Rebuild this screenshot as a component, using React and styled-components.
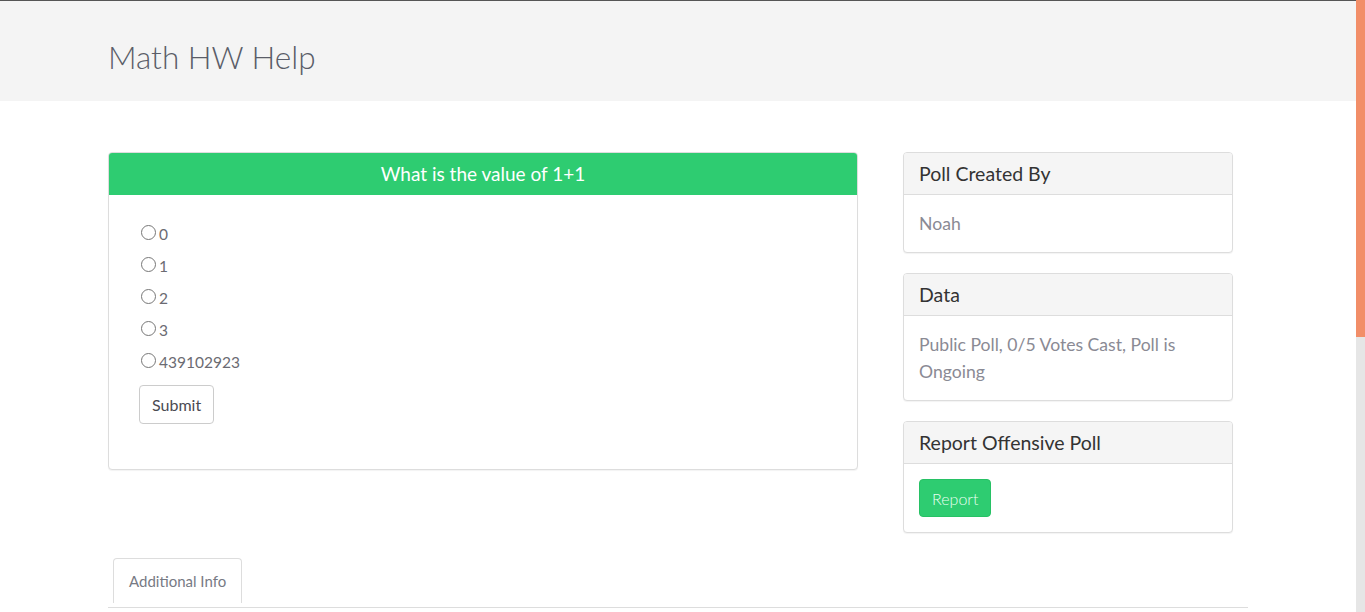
import React from "react";
import styled, { createGlobalStyle } from "styled-components";

const Global = createGlobalStyle`
  html, body { margin: 0; padding: 0; }
  body {
    font-family: Lato, "Open Sans", sans-serif;
    color: #333;
    background: #fff;
    overflow: hidden;
  }
  * { box-sizing: border-box; }
`;

const Shell = styled.div`
  display: flex;
  min-height: 100vh;
`;

const Main = styled.div`
  flex: 1;
  min-width: 0;
`;

const ScrollRail = styled.div`
  flex: 0 0 9px;
  height: 100vh;
  position: sticky;
  top: 0;
  background: #e6e6e6;
`;

const ScrollThumb = styled.div`
  height: 337px;
  background: #f28e68;
`;

const Jumbotron = styled.header`
  background: #f4f4f4;
  border-top: 1px solid #555;
  height: 101px;
`;

const Container = styled.div`
  width: 1170px;
  margin: 0 auto;
  padding: 0 15px;
`;

const Title = styled.h1`
  margin: 0;
  padding-top: 36px;
  font-size: 31.5px;
  font-weight: 300;
  color: #5a5d68;
  line-height: 40px;
`;

const Row = styled.div`
  display: grid;
  grid-template-columns: 750px 330px;
  column-gap: 45px;
  padding-top: 51px;
  align-items: start;
`;

const Column = styled.div`
  display: flex;
  flex-direction: column;
  gap: 20px;
`;

const Panel = styled.section`
  border: 1px solid #ddd;
  border-radius: 4px;
  background: #fff;
  box-shadow: 0 1px 1px rgba(0, 0, 0, 0.05);
  overflow: hidden;
`;

const PanelHeading = styled.div`
  height: 42px;
  display: flex;
  align-items: center;
  justify-content: ${(p) => (p.$center ? "center" : "flex-start")};
  padding: 0 15px;
  background: ${(p) => (p.$green ? "#2ecc71" : "#f5f5f5")};
  color: ${(p) => (p.$green ? "#fff" : "#333")};
  border-bottom: 1px solid ${(p) => (p.$green ? "#2ecc71" : "#ddd")};
  font-size: ${(p) => (p.$green ? "19px" : "19.5px")};
  font-weight: 400;
`;

const PanelBody = styled.div`
  padding: ${(p) => p.$pad || "15px"};
  font-size: 17.6px;
  line-height: 27px;
  color: #8a8a94;
`;

const Options = styled.div`
  display: flex;
  flex-direction: column;
  gap: 8px;
  padding-top: 27px;
`;

const OptionLabel = styled.label`
  display: flex;
  align-items: center;
  height: 24px;
  font-size: 15.5px;
  color: #6b6b72;
`;

const Radio = styled.input`
  width: 15px;
  height: 15px;
  margin: 0 3px 0 2px;
  position: relative;
  top: -2px;
`;

const Button = styled.button`
  font-family: inherit;
  font-size: 16px;
  height: ${(p) => (p.$green ? "38px" : "39px")};
  padding: 0 12px;
  border-radius: 4px;
  border: 1px solid ${(p) => (p.$green ? "#27c165" : "#ccc")};
  background: ${(p) => (p.$green ? "#2ecc71" : "#fff")};
  color: ${(p) => (p.$green ? "#e8fff0" : "#4a4a52")};
  font-weight: ${(p) => (p.$green ? 300 : 400)};
  cursor: pointer;
`;

const ButtonWrap = styled.div`
  padding-top: 11px;
  padding-bottom: 45px;
`;

const Tabs = styled.ul`
  list-style: none;
  margin: 25px 0 0;
  padding: 0 0 0 5px;
  display: flex;
  border-bottom: 1px solid #ddd;
`;

const Tab = styled.li`
  border: 1px solid #ddd;
  border-bottom: none;
  border-radius: 4px 4px 0 0;
  padding: 0 15px;
  height: 45px;
  margin-bottom: 4px;
  display: flex;
  align-items: center;
  font-size: 15px;
  color: #777a84;
`;

const options = ["0", "1", "2", "3", "439102923"];

export default function App() {
  return (
    <Shell>
      <Global />
      <Main>
        <Jumbotron>
          <Container>
            <Title>Math HW Help</Title>
          </Container>
        </Jumbotron>
        <Container>
          <Row>
            <Panel>
              <PanelHeading $green $center>What is the value of 1+1</PanelHeading>
              <PanelBody $pad="0 30px">
                <Options>
                  {options.map((o) => (
                    <OptionLabel key={o}>
                      <Radio type="radio" name="vote" />
                      {o}
                    </OptionLabel>
                  ))}
                </Options>
                <ButtonWrap>
                  <Button>Submit</Button>
                </ButtonWrap>
              </PanelBody>
            </Panel>
            <Column>
              <Panel>
                <PanelHeading>Poll Created By</PanelHeading>
                <PanelBody>Noah</PanelBody>
              </Panel>
              <Panel>
                <PanelHeading>Data</PanelHeading>
                <PanelBody>Public Poll, 0/5 Votes Cast, Poll is Ongoing</PanelBody>
              </Panel>
              <Panel>
                <PanelHeading>Report Offensive Poll</PanelHeading>
                <PanelBody>
                  <Button $green>Report</Button>
                </PanelBody>
              </Panel>
            </Column>
          </Row>
          <Tabs>
            <Tab>Additional Info</Tab>
          </Tabs>
        </Container>
      </Main>
      <ScrollRail>
        <ScrollThumb />
      </ScrollRail>
    </Shell>
  );
}
